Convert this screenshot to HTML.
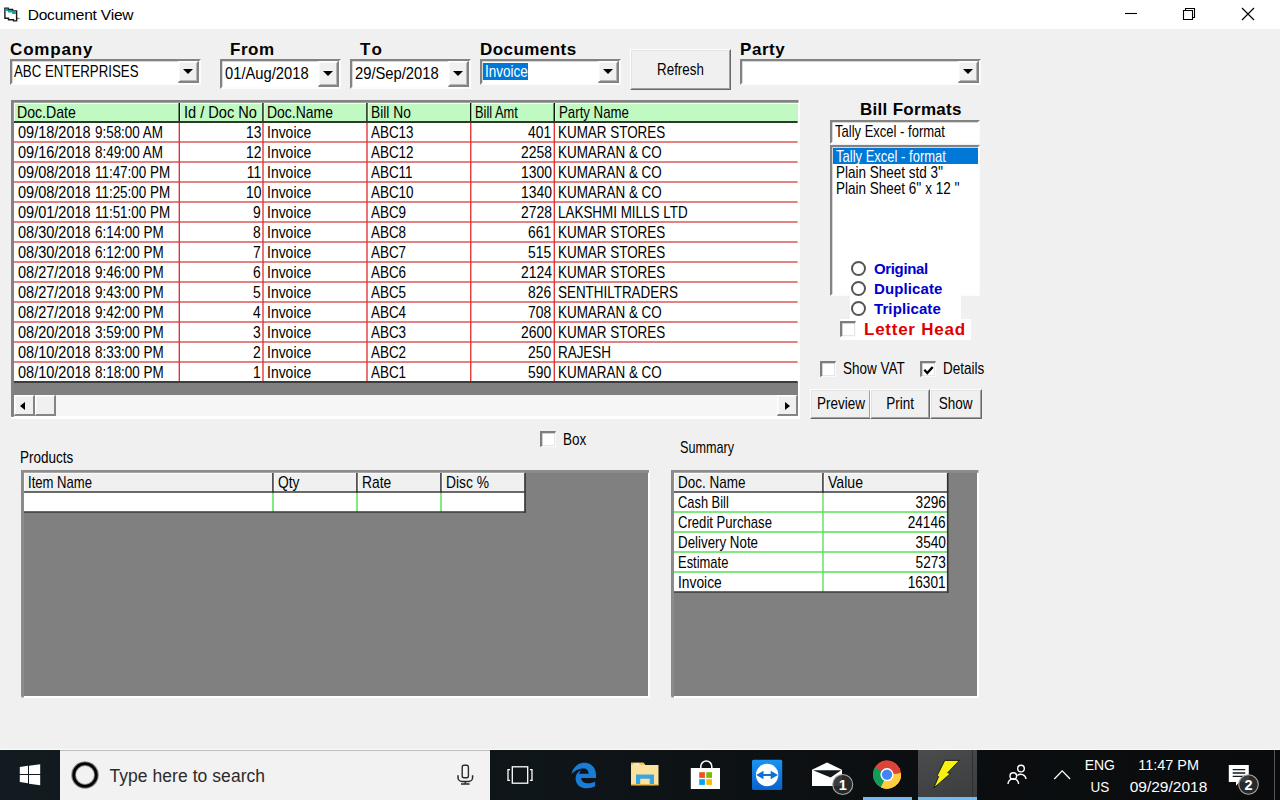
<!DOCTYPE html>
<html lang="en">
<head>
<meta charset="utf-8">
<title>Document View</title>
<style>
html,body{margin:0;padding:0;}
body{width:1280px;height:800px;overflow:hidden;background:#f0f0f0;position:relative;font-family:"Liberation Sans",Arial,sans-serif;font-size:15.7px;color:#000;}
div,span,i,b{box-sizing:border-box;}
.abs{position:absolute;}
#titlebar{position:absolute;left:0;top:0;width:1280px;height:29px;background:#fff;}
#title{position:absolute;left:27.700px;top:4.600px;font-size:15.500px;letter-spacing:-0.2px;line-height:19px;color:#000;white-space:nowrap;}
.tx{display:inline-block;white-space:nowrap;transform:scaleX(.86);transform-origin:0 50%;}
.tx.u{transform:scaleX(.856);}
.tx.d{transform:scaleX(.885);}
.r .tx{transform-origin:100% 50%;}
.btn .tx{transform-origin:50% 50%;}
.lbl{position:absolute;font-weight:bold;font-size:17px;line-height:20px;white-space:nowrap;letter-spacing:0.55px;}
.sunk{position:absolute;background:#fff;border:2px solid;border-color:#838383 #fcfcfc #fcfcfc #838383;box-shadow:inset 0.500px 0.500px 0 #b0b0b0;}
.ctext{position:absolute;left:2px;white-space:nowrap;line-height:18px;}
.dd{position:absolute;background:#f0f0f0;border-style:solid;border-width:1px 2px 2px 1px;border-color:#fff #838383 #838383 #fff;box-shadow:inset 1px 1px 0 #f8f8f8,inset -1px -1px 0 #b8b8b8;}
.dd:after{content:"";position:absolute;left:50%;top:50%;margin-left:-5px;margin-top:-2.500px;border:5px solid transparent;border-top:5.500px solid #000;border-bottom:0;}
.btn{position:absolute;background:#f0f0f0;border:1px solid;border-color:#fff #696969 #696969 #fff;text-align:center;white-space:nowrap;}
.btn:before{content:"";position:absolute;left:0;top:0;right:0;bottom:0;border:1px solid;border-color:#e3e3e3 #a0a0a0 #a0a0a0 #e3e3e3;}
.grid{position:absolute;background:#808080;border:2px solid;border-color:#a0a0a0 #fff #fff #a0a0a0;}
#g1{border:0;background:#808080;}
#g1 .fr{position:absolute;left:0;top:0;right:0;bottom:0;border:2px solid;border-color:#9a9a9a #fff #fff #9a9a9a;}
.hc{position:absolute;height:19px;padding-left:2.600px;line-height:20.800px;white-space:nowrap;overflow:hidden;}
.c{position:absolute;height:20px;line-height:21.400px;padding-left:3.600px;white-space:nowrap;overflow:hidden;}
.c.r{text-align:right;padding-left:0;padding-right:3px;}
.hl{position:absolute;left:2px;width:784px;height:1.4px;background:#e23c3c;}
.vl{position:absolute;top:22px;width:1.4px;height:260px;background:#e02a2a;}
.bl{position:absolute;left:2px;width:784px;height:1.5px;background:#303030;}
.sb{position:absolute;background:#f6f6f6;}
.sbb{position:absolute;top:0;width:21px;height:21px;background:#f0f0f0;border-style:solid;border-width:1px 2px 2px 1px;border-color:#fff #858585 #858585 #fff;box-shadow:inset 1px 1px 0 #f8f8f8;}
.al,.ar{position:absolute;top:5.500px;border:4.500px solid transparent;}
.al{left:5px;border-right:5px solid #000;border-left:0;}
.ar{left:7px;border-left:5px solid #000;border-right:0;}
.cb{position:absolute;width:16px;height:16px;background:#fff;border-style:solid;border-width:2px 1px 1px 2px;border-color:#7e7e7e #fafafa #fafafa #7e7e7e;box-shadow:inset 0.500px 0.500px 0 #a8a8a8,inset -1px -1px 0 #e6e6e6;}
.t{position:absolute;white-space:nowrap;line-height:18px;}
.radio{position:absolute;width:15px;height:15px;border-radius:50%;border:2px solid #555;background:#fff;}
.rl{position:absolute;font-weight:bold;color:#0000cc;font-size:15px;line-height:18px;white-space:nowrap;letter-spacing:0.1px;}
.g2h{position:absolute;background:#f0f0f0;border-right:1.3px solid #222;border-bottom:1.5px solid #222;border-top:1px solid #fff;border-left:1px solid #fff;padding-left:3px;line-height:19px;white-space:nowrap;overflow:hidden;height:20px;}
.g2c{position:absolute;background:#fff;height:20px;line-height:20px;padding-left:4px;white-space:nowrap;overflow:hidden;}
.g2c.r{text-align:right;padding-left:0;padding-right:2px;}
#taskbar{position:absolute;left:0;top:750px;width:1280px;height:50px;background:linear-gradient(90deg,#121b20 0,#0f161a 490px,#0d1215 700px,#0b0e10 980px,#0a0b0c 1280px);}
</style>
</head>
<body>
<div id="titlebar">
<svg class="abs" style="left:0;top:0" width="26" height="29" viewBox="0 0 26 29"><path d="M17 17.300l3.800 1.300-3.800 1z" fill="#8a8a8a"/><path d="M4.900 8.100h3.300v1.300h4.400v1.500h4v10h-3.100v-1.200h-5v-1.400h-3.600z" fill="#fff" stroke="#1a1a1a" stroke-width="1.400" stroke-linejoin="miter"/><path d="M5.700 8.800h2.200l.3 1.300h4.200l.2 1.500h3.300v2.300h-3.600l-.2-1.500h-4.100l-.2-1.300h-2.100z" fill="#17a0a0"/></svg>
<div id="title">Document View</div>
<svg class="abs" style="left:1120px;top:5px" width="20" height="20" viewBox="0 0 20 20"><path d="M5 8.500h12" stroke="#000" stroke-width="1.100" fill="none"/></svg>
<svg class="abs" style="left:1178px;top:3px" width="22" height="22" viewBox="0 0 22 22"><path d="M5.500 7.500h9v9h-9z M7.500 7.500v-2h9v9h-2" stroke="#000" stroke-width="1.100" fill="none"/></svg>
<svg class="abs" style="left:1236px;top:3px" width="24" height="24" viewBox="0 0 24 24"><path d="M6 5l12 12M18 5l-12 12" stroke="#000" stroke-width="1.200" fill="none"/></svg>
</div>

<div class="lbl" style="left:10px;top:40px;letter-spacing:.85px">Company</div>
<div class="sunk" style="left:10px;top:59px;width:191px;height:26px"><div class="ctext" style="top:2px"><span class="tx" style="transform:scaleX(.845)">ABC ENTERPRISES</span></div><div class="dd" style="right:0;top:0;width:21px;height:22px"></div></div>

<div class="lbl" style="left:230px;top:40px">From</div>
<div class="sunk" style="left:220px;top:59px;width:121px;height:30px"><div class="ctext" style="left:3px;top:4px"><span class="tx" style="transform:scaleX(.94)">01/Aug/2018</span></div><div class="dd" style="right:0;top:0;width:21px;height:26px"></div></div>

<div class="lbl" style="left:360px;top:40px;letter-spacing:2.5px">To</div>
<div class="sunk" style="left:350px;top:59px;width:121px;height:30px"><div class="ctext" style="left:3px;top:4px"><span class="tx" style="transform:scaleX(.94)">29/Sep/2018</span></div><div class="dd" style="right:0;top:0;width:21px;height:26px"></div></div>

<div class="lbl" style="left:480px;top:40px;letter-spacing:.45px">Documents</div>
<div class="sunk" style="left:480px;top:59px;width:141px;height:26px"><div class="ctext" style="left:1px;top:2px;background:#0078d7;color:#fff;padding:0 0 0 2px;width:45px;height:17px;line-height:17px"><span class="tx">Invoice</span></div><div class="dd" style="right:0;top:0;width:21px;height:22px"></div></div>

<div class="btn" style="left:630px;top:49px;width:101px;height:41px;line-height:39px"><span class="tx" style="transform:scaleX(.85)">Refresh</span></div>

<div class="lbl" style="left:740px;top:40px">Party</div>
<div class="sunk" style="left:740px;top:59px;width:241px;height:26px"><div class="dd" style="right:0;top:0;width:21px;height:22px"></div></div>
<div class="abs" style="left:11px;top:100px;width:789px;height:319px;background:#fff"></div>
<div class="abs" style="left:11px;top:100px;width:787px;height:316px;background:#808080"></div>
<div class="abs" style="left:14px;top:103px;width:784px;height:279px;background:#fff"></div>
<div class="abs" style="left:15px;top:104px;width:783px;height:18px;background:#c0f9c1"></div>
<div class="hc" style="left:15.0px;top:103px;width:163.3px;padding-left:1.8px"><span class="tx" style="transform:scaleX(0.9)">Doc.Date</span></div>
<div class="hc" style="left:179.9px;top:103px;width:82.1px;padding-left:3.7px"><span class="tx" style="transform:scaleX(0.93)">Id / Doc No</span></div>
<div class="hc" style="left:263.6px;top:103px;width:102.4px;padding-left:3.6px"><span class="tx" style="transform:scaleX(0.89)">Doc.Name</span></div>
<div class="hc" style="left:367.6px;top:103px;width:102.1px;padding-left:3.6px"><span class="tx" style="transform:scaleX(0.88)">Bill No</span></div>
<div class="hc" style="left:471.4px;top:103px;width:81.9px;padding-left:3.6px"><span class="tx" style="transform:scaleX(0.82)">Bill Amt</span></div>
<div class="hc" style="left:554.9px;top:103px;width:241.7px;padding-left:4.0px"><span class="tx" style="transform:scaleX(0.845)">Party Name</span></div>
<div class="c" style="left:14.5px;top:122px;width:164.2px"><span class="tx" style="transform:scaleX(.925)">09/18/2018</span><span class="tx" style="transform:scaleX(.855);margin-left:-2px">9:58:00 AM</span></div>
<div class="c r" style="left:179.9px;top:122px;width:82.5px;padding-right:1.300px"><span class="tx d">13</span></div>
<div class="c" style="left:263.6px;top:122px;width:102.8px"><span class="tx" style="transform:scaleX(.89)">Invoice</span></div>
<div class="c" style="left:367.6px;top:122px;width:102.5px"><span class="tx u">ABC13</span></div>
<div class="c r" style="left:471.4px;top:122px;width:82.3px;padding-right:2.200px"><span class="tx d">401</span></div>
<div class="c" style="left:554.9px;top:122px;width:242.1px"><span class="tx u">KUMAR STORES</span></div>
<div class="c" style="left:14.5px;top:142px;width:164.2px"><span class="tx" style="transform:scaleX(.925)">09/16/2018</span><span class="tx" style="transform:scaleX(.855);margin-left:-2px">8:49:00 AM</span></div>
<div class="c r" style="left:179.9px;top:142px;width:82.5px;padding-right:1.300px"><span class="tx d">12</span></div>
<div class="c" style="left:263.6px;top:142px;width:102.8px"><span class="tx" style="transform:scaleX(.89)">Invoice</span></div>
<div class="c" style="left:367.6px;top:142px;width:102.5px"><span class="tx u">ABC12</span></div>
<div class="c r" style="left:471.4px;top:142px;width:82.3px;padding-right:2.200px"><span class="tx d">2258</span></div>
<div class="c" style="left:554.9px;top:142px;width:242.1px"><span class="tx u">KUMARAN &amp; CO</span></div>
<div class="c" style="left:14.5px;top:162px;width:164.2px"><span class="tx" style="transform:scaleX(.925)">09/08/2018</span><span class="tx" style="transform:scaleX(.855);margin-left:-2px">11:47:00 PM</span></div>
<div class="c r" style="left:179.9px;top:162px;width:82.5px;padding-right:1.300px"><span class="tx d">11</span></div>
<div class="c" style="left:263.6px;top:162px;width:102.8px"><span class="tx" style="transform:scaleX(.89)">Invoice</span></div>
<div class="c" style="left:367.6px;top:162px;width:102.5px"><span class="tx u">ABC11</span></div>
<div class="c r" style="left:471.4px;top:162px;width:82.3px;padding-right:2.200px"><span class="tx d">1300</span></div>
<div class="c" style="left:554.9px;top:162px;width:242.1px"><span class="tx u">KUMARAN &amp; CO</span></div>
<div class="c" style="left:14.5px;top:182px;width:164.2px"><span class="tx" style="transform:scaleX(.925)">09/08/2018</span><span class="tx" style="transform:scaleX(.855);margin-left:-2px">11:25:00 PM</span></div>
<div class="c r" style="left:179.9px;top:182px;width:82.5px;padding-right:1.300px"><span class="tx d">10</span></div>
<div class="c" style="left:263.6px;top:182px;width:102.8px"><span class="tx" style="transform:scaleX(.89)">Invoice</span></div>
<div class="c" style="left:367.6px;top:182px;width:102.5px"><span class="tx u">ABC10</span></div>
<div class="c r" style="left:471.4px;top:182px;width:82.3px;padding-right:2.200px"><span class="tx d">1340</span></div>
<div class="c" style="left:554.9px;top:182px;width:242.1px"><span class="tx u">KUMARAN &amp; CO</span></div>
<div class="c" style="left:14.5px;top:202px;width:164.2px"><span class="tx" style="transform:scaleX(.925)">09/01/2018</span><span class="tx" style="transform:scaleX(.855);margin-left:-2px">11:51:00 PM</span></div>
<div class="c r" style="left:179.9px;top:202px;width:82.5px;padding-right:1.300px"><span class="tx d">9</span></div>
<div class="c" style="left:263.6px;top:202px;width:102.8px"><span class="tx" style="transform:scaleX(.89)">Invoice</span></div>
<div class="c" style="left:367.6px;top:202px;width:102.5px"><span class="tx u">ABC9</span></div>
<div class="c r" style="left:471.4px;top:202px;width:82.3px;padding-right:2.200px"><span class="tx d">2728</span></div>
<div class="c" style="left:554.9px;top:202px;width:242.1px"><span class="tx u">LAKSHMI MILLS LTD</span></div>
<div class="c" style="left:14.5px;top:222px;width:164.2px"><span class="tx" style="transform:scaleX(.925)">08/30/2018</span><span class="tx" style="transform:scaleX(.855);margin-left:-2px">6:14:00 PM</span></div>
<div class="c r" style="left:179.9px;top:222px;width:82.5px;padding-right:1.300px"><span class="tx d">8</span></div>
<div class="c" style="left:263.6px;top:222px;width:102.8px"><span class="tx" style="transform:scaleX(.89)">Invoice</span></div>
<div class="c" style="left:367.6px;top:222px;width:102.5px"><span class="tx u">ABC8</span></div>
<div class="c r" style="left:471.4px;top:222px;width:82.3px;padding-right:2.200px"><span class="tx d">661</span></div>
<div class="c" style="left:554.9px;top:222px;width:242.1px"><span class="tx u">KUMAR STORES</span></div>
<div class="c" style="left:14.5px;top:242px;width:164.2px"><span class="tx" style="transform:scaleX(.925)">08/30/2018</span><span class="tx" style="transform:scaleX(.855);margin-left:-2px">6:12:00 PM</span></div>
<div class="c r" style="left:179.9px;top:242px;width:82.5px;padding-right:1.300px"><span class="tx d">7</span></div>
<div class="c" style="left:263.6px;top:242px;width:102.8px"><span class="tx" style="transform:scaleX(.89)">Invoice</span></div>
<div class="c" style="left:367.6px;top:242px;width:102.5px"><span class="tx u">ABC7</span></div>
<div class="c r" style="left:471.4px;top:242px;width:82.3px;padding-right:2.200px"><span class="tx d">515</span></div>
<div class="c" style="left:554.9px;top:242px;width:242.1px"><span class="tx u">KUMAR STORES</span></div>
<div class="c" style="left:14.5px;top:262px;width:164.2px"><span class="tx" style="transform:scaleX(.925)">08/27/2018</span><span class="tx" style="transform:scaleX(.855);margin-left:-2px">9:46:00 PM</span></div>
<div class="c r" style="left:179.9px;top:262px;width:82.5px;padding-right:1.300px"><span class="tx d">6</span></div>
<div class="c" style="left:263.6px;top:262px;width:102.8px"><span class="tx" style="transform:scaleX(.89)">Invoice</span></div>
<div class="c" style="left:367.6px;top:262px;width:102.5px"><span class="tx u">ABC6</span></div>
<div class="c r" style="left:471.4px;top:262px;width:82.3px;padding-right:2.200px"><span class="tx d">2124</span></div>
<div class="c" style="left:554.9px;top:262px;width:242.1px"><span class="tx u">KUMAR STORES</span></div>
<div class="c" style="left:14.5px;top:282px;width:164.2px"><span class="tx" style="transform:scaleX(.925)">08/27/2018</span><span class="tx" style="transform:scaleX(.855);margin-left:-2px">9:43:00 PM</span></div>
<div class="c r" style="left:179.9px;top:282px;width:82.5px;padding-right:1.300px"><span class="tx d">5</span></div>
<div class="c" style="left:263.6px;top:282px;width:102.8px"><span class="tx" style="transform:scaleX(.89)">Invoice</span></div>
<div class="c" style="left:367.6px;top:282px;width:102.5px"><span class="tx u">ABC5</span></div>
<div class="c r" style="left:471.4px;top:282px;width:82.3px;padding-right:2.200px"><span class="tx d">826</span></div>
<div class="c" style="left:554.9px;top:282px;width:242.1px"><span class="tx u">SENTHILTRADERS</span></div>
<div class="c" style="left:14.5px;top:302px;width:164.2px"><span class="tx" style="transform:scaleX(.925)">08/27/2018</span><span class="tx" style="transform:scaleX(.855);margin-left:-2px">9:42:00 PM</span></div>
<div class="c r" style="left:179.9px;top:302px;width:82.5px;padding-right:1.300px"><span class="tx d">4</span></div>
<div class="c" style="left:263.6px;top:302px;width:102.8px"><span class="tx" style="transform:scaleX(.89)">Invoice</span></div>
<div class="c" style="left:367.6px;top:302px;width:102.5px"><span class="tx u">ABC4</span></div>
<div class="c r" style="left:471.4px;top:302px;width:82.3px;padding-right:2.200px"><span class="tx d">708</span></div>
<div class="c" style="left:554.9px;top:302px;width:242.1px"><span class="tx u">KUMARAN &amp; CO</span></div>
<div class="c" style="left:14.5px;top:322px;width:164.2px"><span class="tx" style="transform:scaleX(.925)">08/20/2018</span><span class="tx" style="transform:scaleX(.855);margin-left:-2px">3:59:00 PM</span></div>
<div class="c r" style="left:179.9px;top:322px;width:82.5px;padding-right:1.300px"><span class="tx d">3</span></div>
<div class="c" style="left:263.6px;top:322px;width:102.8px"><span class="tx" style="transform:scaleX(.89)">Invoice</span></div>
<div class="c" style="left:367.6px;top:322px;width:102.5px"><span class="tx u">ABC3</span></div>
<div class="c r" style="left:471.4px;top:322px;width:82.3px;padding-right:2.200px"><span class="tx d">2600</span></div>
<div class="c" style="left:554.9px;top:322px;width:242.1px"><span class="tx u">KUMAR STORES</span></div>
<div class="c" style="left:14.5px;top:342px;width:164.2px"><span class="tx" style="transform:scaleX(.925)">08/10/2018</span><span class="tx" style="transform:scaleX(.855);margin-left:-2px">8:33:00 PM</span></div>
<div class="c r" style="left:179.9px;top:342px;width:82.5px;padding-right:1.300px"><span class="tx d">2</span></div>
<div class="c" style="left:263.6px;top:342px;width:102.8px"><span class="tx" style="transform:scaleX(.89)">Invoice</span></div>
<div class="c" style="left:367.6px;top:342px;width:102.5px"><span class="tx u">ABC2</span></div>
<div class="c r" style="left:471.4px;top:342px;width:82.3px;padding-right:2.200px"><span class="tx d">250</span></div>
<div class="c" style="left:554.9px;top:342px;width:242.1px"><span class="tx u">RAJESH</span></div>
<div class="c" style="left:14.5px;top:362px;width:164.2px"><span class="tx" style="transform:scaleX(.925)">08/10/2018</span><span class="tx" style="transform:scaleX(.855);margin-left:-2px">8:18:00 PM</span></div>
<div class="c r" style="left:179.9px;top:362px;width:82.5px;padding-right:1.300px"><span class="tx d">1</span></div>
<div class="c" style="left:263.6px;top:362px;width:102.8px"><span class="tx" style="transform:scaleX(.89)">Invoice</span></div>
<div class="c" style="left:367.6px;top:362px;width:102.5px"><span class="tx u">ABC1</span></div>
<div class="c r" style="left:471.4px;top:362px;width:82.3px;padding-right:2.200px"><span class="tx d">590</span></div>
<div class="c" style="left:554.9px;top:362px;width:242.1px"><span class="tx u">KUMARAN &amp; CO</span></div>
<div class="sb" style="left:14px;top:395px;width:784px;height:21px"><div class="sbb" style="left:0"><i class="al"></i></div><div class="sbb" style="left:21px;width:21px"></div><div class="sbb" style="right:0"><i class="ar"></i></div></div>
<svg class="abs" style="left:0;top:95px" width="820" height="330" viewBox="0 95 820 330">
<path d="M12.5 417V101.350H798.500" fill="none" stroke="#838383" stroke-width="2.600"/>
<path d="M14.400 122V103.300H797.600" fill="none" stroke="#f2fff2" stroke-width="1.100"/>
<path d="M14 142.0H797.600M14 162.0H797.600M14 182.0H797.600M14 202.0H797.600M14 222.0H797.600M14 242.0H797.600M14 262.0H797.600M14 282.0H797.600M14 302.0H797.600M14 322.0H797.600M14 342.0H797.600M14 362.0H797.600" fill="none" stroke="#d95a5a" stroke-width="1.500"/>
<path d="M179.30 122V382M263.00 122V382M367.00 122V382M470.75 122V382M554.30 122V382" fill="none" stroke="#e23232" stroke-width="1.350"/>
<path d="M179.30 103V122.800M263.00 103V122.800M367.00 103V122.800M470.75 103V122.800M554.30 103V122.800" fill="none" stroke="#0c180c" stroke-width="1.500"/>
<path d="M180.60 103.500V121M264.30 103.500V121M368.30 103.500V121M472.05 103.500V121M555.60 103.500V121" fill="none" stroke="#e6ffe6" stroke-width="0.900"/>
<path d="M14 122.0H797.600" fill="none" stroke="#2c3a2c" stroke-width="1.800"/>
<path d="M14 382H797.600" fill="none" stroke="#3c3c3c" stroke-width="1.900"/>
</svg>
<div class="lbl" style="left:860px;top:100px;letter-spacing:.3px">Bill Formats</div>
<div class="sunk" style="left:830px;top:120px;width:150px;height:24px"><div class="ctext" style="left:3px;top:1px"><span class="tx" style="transform:scaleX(.83)">Tally Excel - format</span></div></div>
<div class="sunk" style="left:830px;top:145px;width:150px;height:151px">
<div class="abs" style="left:1px;top:1px;width:145px;height:16px;background:#0078d7;color:#fff;line-height:18px;padding-left:3px"><span class="tx" style="transform:scaleX(.83)">Tally Excel - format</span></div>
<div class="abs" style="left:1px;top:17px;width:145px;height:16px;line-height:18px;padding-left:3px"><span class="tx">Plain Sheet std 3''</span></div>
<div class="abs" style="left:1px;top:33px;width:145px;height:16px;line-height:18px;padding-left:3px"><span class="tx">Plain Sheet 6'' x 12 ''</span></div>
</div>
<div class="abs" style="left:850px;top:259px;width:111px;height:60px;background:#fff"></div>
<div class="abs" style="left:840px;top:319px;width:131px;height:21px;background:#fff"></div>
<div class="radio" style="left:851px;top:261px"></div><div class="rl" style="left:874px;top:260px;letter-spacing:-.35px">Original</div>
<div class="radio" style="left:851px;top:281px"></div><div class="rl" style="left:874px;top:280px">Duplicate</div>
<div class="radio" style="left:851px;top:301px"></div><div class="rl" style="left:874px;top:300px">Triplicate</div>
<div class="cb" style="left:840px;top:321px"></div>
<div class="lbl" style="left:864px;top:320px;color:#e00000;letter-spacing:.75px">Letter Head</div>

<div class="cb" style="left:820px;top:361px"></div><div class="t" style="left:843px;top:360px"><span class="tx">Show VAT</span></div>
<div class="cb" style="left:920px;top:361px"><svg class="abs" style="left:0px;top:0.500px" width="13" height="13" viewBox="0 0 13 13"><path d="M2.300 5.800l3 3.200 5.400-6" stroke="#000" stroke-width="2.300" fill="none"/></svg></div><div class="t" style="left:943px;top:360px"><span class="tx">Details</span></div>

<div class="btn" style="left:810px;top:389px;width:61px;height:30px;line-height:28.500px"><span class="tx">Preview</span></div>
<div class="btn" style="left:870px;top:389px;width:60px;height:30px;line-height:28.500px"><span class="tx">Print</span></div>
<div class="btn" style="left:930px;top:389px;width:52px;height:30px;line-height:28.500px"><span class="tx">Show</span></div>

<div class="cb" style="left:540px;top:431px"></div><div class="t" style="left:563px;top:431px"><span class="tx">Box</span></div>
<div class="t" style="left:20px;top:449px"><span class="tx">Products</span></div>
<div class="t" style="left:680px;top:439px"><span class="tx" style="transform:scaleX(.805)">Summary</span></div>

<div class="abs" style="left:21px;top:470px;width:629px;height:228px;background:#fff"></div>
<div class="abs" style="left:21px;top:470px;width:627px;height:226px;background:#808080"></div>
<div class="abs" style="left:24px;top:473px;width:501px;height:19px;background:#f0f0f0"></div>
<div class="abs" style="left:24px;top:492px;width:501px;height:20px;background:#fff"></div>
<div class="hc" style="left:25.0px;top:473px;width:247.0px"><span class="tx" style="transform:scaleX(.835)">Item Name</span></div>
<div class="hc" style="left:273.6px;top:473px;width:82.4px"><span class="tx" style="margin-left:1.600px;transform:scaleX(.88)">Qty</span></div>
<div class="hc" style="left:357.6px;top:473px;width:82.4px"><span class="tx" style="margin-left:1.600px;transform:scaleX(.88)">Rate</span></div>
<div class="hc" style="left:441.6px;top:473px;width:82.4px"><span class="tx" style="margin-left:1.600px;transform:scaleX(.88)">Disc %</span></div>
<div class="abs" style="left:671px;top:470px;width:308px;height:228px;background:#fff"></div>
<div class="abs" style="left:671px;top:470px;width:306px;height:226px;background:#808080"></div>
<div class="abs" style="left:674px;top:473px;width:274px;height:19px;background:#f0f0f0"></div>
<div class="abs" style="left:674px;top:492px;width:274px;height:100px;background:#fff"></div>
<div class="hc" style="left:675.0px;top:473px;width:147.0px"><span class="tx">Doc. Name</span></div>
<div class="hc" style="left:823.6px;top:473px;width:123.1px"><span class="tx" style="transform:scaleX(.9);margin-left:1.600px">Value</span></div>
<div class="c" style="left:674.5px;top:492px;width:148px"><span class="tx" style="transform:scaleX(0.82)">Cash Bill</span></div>
<div class="c r" style="left:823.6px;top:492px;width:123.5px;padding-right:1.300px"><span class="tx d" style="transform:scaleX(.87)">3296</span></div>
<div class="c" style="left:674.5px;top:512px;width:148px"><span class="tx" style="transform:scaleX(0.835)">Credit Purchase</span></div>
<div class="c r" style="left:823.6px;top:512px;width:123.5px;padding-right:1.300px"><span class="tx d" style="transform:scaleX(.87)">24146</span></div>
<div class="c" style="left:674.5px;top:532px;width:148px"><span class="tx" style="transform:scaleX(0.85)">Delivery Note</span></div>
<div class="c r" style="left:823.6px;top:532px;width:123.5px;padding-right:1.300px"><span class="tx d" style="transform:scaleX(.87)">3540</span></div>
<div class="c" style="left:674.5px;top:552px;width:148px"><span class="tx" style="transform:scaleX(0.825)">Estimate</span></div>
<div class="c r" style="left:823.6px;top:552px;width:123.5px;padding-right:1.300px"><span class="tx d" style="transform:scaleX(.87)">5273</span></div>
<div class="c" style="left:674.5px;top:572px;width:148px"><span class="tx" style="transform:scaleX(0.88)">Invoice</span></div>
<div class="c r" style="left:823.6px;top:572px;width:123.5px;padding-right:1.300px"><span class="tx d" style="transform:scaleX(.87)">16301</span></div>
<svg class="abs" style="left:0;top:465px" width="1000" height="240" viewBox="0 465 1000 240">
<path d="M22.550 697.500V471.400H649" fill="none" stroke="#8c8c8c" stroke-width="2.700"/>
<path d="M672.550 697.500V471.400H978.500" fill="none" stroke="#8c8c8c" stroke-width="2.700"/>
<path d="M24.500 492V473.300H525" fill="none" stroke="#fff" stroke-width="1.100"/>
<path d="M674.500 492V473.300H947.700" fill="none" stroke="#fff" stroke-width="1.100"/>
<path d="M273 492V512M357 492V512M441 492V512" fill="none" stroke="#45e045" stroke-width="1.350"/>
<path d="M273 473V492.800M357 473V492.800M441 473V492.800M525 473V492.800M525 492V513" fill="none" stroke="#303030" stroke-width="1.600"/>
<path d="M274.3 473.500V491M358.3 473.500V491M442.3 473.500V491" fill="none" stroke="#fff" stroke-width="0.900"/>
<path d="M24 492H525.800M24 512H525.800" fill="none" stroke="#3a3a3a" stroke-width="1.600"/>
<path d="M674 512H947.700M674 532H947.700M674 552H947.700M674 572H947.700M823 492V592" fill="none" stroke="#55e255" stroke-width="1.350"/>
<path d="M823 473V492.800M947.700 473V593" fill="none" stroke="#303030" stroke-width="1.600"/>
<path d="M824.300 473.500V491" fill="none" stroke="#fff" stroke-width="0.900"/>
<path d="M674 492H948.500M674 592H948.500" fill="none" stroke="#3a3a3a" stroke-width="1.600"/>
</svg>
<div class="abs" style="left:0;top:749px;width:1280px;height:1px;background:#fafafa"></div>
<div id="taskbar">
<div class="abs" style="left:60px;top:0;width:430px;height:50px;background:#f2f2f2;border-top:1px solid #bcbcbc"></div>
<div class="abs" style="left:918px;top:0;width:59px;height:50px;background:linear-gradient(160deg,#4a4c4d,#3a3c3d)"></div>
<div class="abs" style="left:972px;top:0;width:1px;height:47px;background:#2c3033"></div>
<div class="abs" style="left:863px;top:47px;width:49px;height:3px;background:#76b9ed"></div>
<div class="abs" style="left:918px;top:47px;width:59px;height:3px;background:#76b9ed"></div>
<div class="abs" style="left:1274px;top:0;width:1px;height:50px;background:#555"></div>
<div class="abs" style="left:109.500px;top:15px;font-size:17.500px;line-height:22px;color:#2b2b2b;white-space:nowrap;letter-spacing:0.05px">Type here to search</div>
<div class="abs" style="left:1079.500px;top:3.600px;width:40px;text-align:center;color:#fff;font-size:15.500px;line-height:22px;white-space:nowrap"><span class="tx" style="transform:scaleX(.9);transform-origin:50% 50%">ENG</span><br><span class="tx" style="transform:scaleX(.87);transform-origin:50% 50%">US</span></div>
<div class="abs" style="left:1118.500px;top:3.600px;width:100px;text-align:center;color:#fff;font-size:15.500px;line-height:22px;white-space:nowrap"><span class="tx" style="transform:scaleX(.93);transform-origin:50% 50%">11:47 PM</span><br><span class="tx" style="transform:scaleX(1);transform-origin:50% 50%">09/29/2018</span></div>
<svg class="abs" style="left:0;top:0" width="1280" height="50" viewBox="0 750 1280 50">
<!-- windows logo -->
<path d="M19.800 767l8.200-1.150v8.250h-8.200zM29 765.700l11.200-1.550v9.950h-11.200zM19.800 775h8.200v8.250l-8.200-1.150zM29 775h11.200v10.200l-11.200-1.550z" fill="#fff"/>
<!-- cortana ring -->
<circle cx="85" cy="775" r="11.400" fill="none" stroke="#8a8a8a" stroke-width="4.800"/>
<circle cx="85" cy="775" r="11.300" fill="none" stroke="#050505" stroke-width="2.800"/>
<!-- mic -->
<rect x="462.200" y="765.300" width="6.200" height="12.400" rx="1.800" fill="none" stroke="#2a2a2a" stroke-width="1.400"/>
<path d="M458 775.300v2.200a4 4 0 0 0 4 4h6.600a4 4 0 0 0 4-4v-2.200M465.300 781.500v2.300M461 784h8.600" fill="none" stroke="#2a2a2a" stroke-width="1.500"/>
<!-- task view -->
<rect x="512.300" y="766.800" width="15.400" height="16.400" fill="none" stroke="#fff" stroke-width="1.300"/>
<path d="M510 769.700h-2v10.600h2M530 769.700h2v10.600h-2" fill="none" stroke="#fff" stroke-width="1.300"/>
<!-- edge -->
<g transform="translate(570.500,761.700) scale(.93)"><path d="M1 13.500C2.500 6 8 1 15 1 23 1 27.500 7 27.500 14.500v3H11.500c.2 4 3.500 5.800 7.500 5.800 3 0 5.500-.8 7.500-2v5.200C24 27.800 21 28.600 17.500 28.600 10 28.600 5.500 24 5.500 18c0-4.200 2.400-7.500 6-9.200C10 10.300 9.500 12 9.300 13h10.200C19.500 9.500 17.500 7.300 14 7.300 9 7.300 4 9.800 1 13.500z" fill="#1b7cd6"/></g>
<!-- explorer -->
<path d="M631 762.700h12.500l1.800 2.200h13.200v20.300h-27.500z" fill="#fbe29d"/>
<path d="M631 762.700h12.500l1.800 2.200h-14.300z" fill="#f0c75a"/>
<rect x="633.500" y="763.500" width="6" height="1.300" fill="#fff" opacity=".9"/>
<path d="M636 785.200v-10.600h18v10.600h-4.300v-6.400h-9.500v6.400z" fill="#3aa5e2"/>
<rect x="631" y="784" width="27.500" height="1.300" fill="#e8b84a"/>
<!-- store -->
<path d="M700.800 768v-1.500a5.500 5.500 0 0 1 11 0v1.500" fill="none" stroke="#fff" stroke-width="1.500"/>
<rect x="690.800" y="768" width="29.200" height="21" fill="#fff"/>
<rect x="699.200" y="772.200" width="5.700" height="5.700" fill="#f25022"/><rect x="706.300" y="772.200" width="5.700" height="5.700" fill="#7fba00"/><rect x="699.200" y="779.200" width="5.700" height="5.700" fill="#00a4ef"/><rect x="706.300" y="779.200" width="5.700" height="5.700" fill="#ffb900"/>
<!-- teamviewer -->
<defs><linearGradient id="tvg" x1="0" y1="0" x2="0" y2="1"><stop offset="0" stop-color="#1a93f2"/><stop offset="1" stop-color="#0a62cc"/></linearGradient></defs>
<rect x="752" y="759.800" width="30.200" height="30.200" rx="1.500" fill="url(#tvg)"/>
<circle cx="767.100" cy="775" r="11.200" fill="#fff"/>
<path d="M756.200 775l7.300-4.200v3.100h7.200v-3.100l7.300 4.200-7.300 4.200v-3.100h-7.200v3.100z" fill="#0e70d4"/>
<!-- mail -->
<path d="M812 769.800l15-7.400 15 7.400v16.100h-30z" fill="#fff"/>
<path d="M813 770.200h28.200l-10.500 7.300z" fill="#11181c"/>
<path d="M812.300 770.500l18.500 12.500" stroke="#11181c" stroke-width="0" fill="none"/>
<circle cx="842.700" cy="784.500" r="10" fill="#2d2d2d" fill-opacity=".92" stroke="#a9a9a9" stroke-width="1.100"/>
<text x="842.900" y="789.700" text-anchor="middle" font-family="Liberation Sans, sans-serif" font-weight="bold" font-size="14.500" fill="#fff">1</text>
<!-- chrome -->
<g transform="translate(887,774.600)"><circle r="14" fill="#db4437"/><path d="M0 0L-12.120 -7A14 14 0 0 0 -6.100 12.600z" fill="#0f9d58"/><path d="M0 0L-6.100 12.600A14 14 0 0 0 13.900 -1.600z" fill="#ffcd40"/><path d="M0 0L13.900 -1.600A14 14 0 0 0 -12.120 -7z" fill="#db4437"/><path d="M-12.120 -7L-5.500 4.200 0 0z" fill="#0f9d58"/><path d="M-6.100 12.600L0.800 6.400 5.600 3.200 13.900 -1.600A14 14 0 0 1 -6.100 12.600z" fill="#ffcd40"/><path d="M13.900 -6.300H0V0z" fill="#db4437"/><circle r="6.600" fill="#fff"/><circle r="5.200" fill="#4285f4"/></g>
<!-- lightning -->
<path d="M944.750 760.400L959.400 760.400L947.600 772.800L950.650 773.400L933.800 788L938.600 776.500L937.200 775.500Z" fill="#f8f010" stroke="#151510" stroke-width="0.900" stroke-linejoin="round"/>
<!-- people -->
<circle cx="1021" cy="768.600" r="3.300" fill="none" stroke="#fff" stroke-width="1.400"/>
<path d="M1017.300 775.500a5.300 5.300 0 0 1 8.700 3.500" fill="none" stroke="#fff" stroke-width="1.400"/>
<circle cx="1013.300" cy="776" r="3.300" fill="none" stroke="#fff" stroke-width="1.400"/>
<path d="M1008 784a5.300 5.300 0 0 1 10.600 0" fill="none" stroke="#fff" stroke-width="1.400"/>
<!-- chevron -->
<path d="M1054.300 779l7.900-8.100 7.900 8.100" fill="none" stroke="#fff" stroke-width="1.300"/>
<!-- notifications -->
<path d="M1228.800 765h20v17h-9.500l-3.300 3.800v-3.800h-7.200z" fill="#fff"/>
<path d="M1232.700 769.700h12.500M1232.700 773h12.500M1232.700 776.300h12.500" stroke="#11181c" stroke-width="1.300"/>
<circle cx="1248.500" cy="784.500" r="9.800" fill="#2d2d2d" fill-opacity=".92" stroke="#a9a9a9" stroke-width="1.100"/>
<text x="1248.500" y="789.700" text-anchor="middle" font-family="Liberation Sans, sans-serif" font-weight="bold" font-size="14.500" fill="#fff">2</text>
</svg>
</div>
</body>
</html>
